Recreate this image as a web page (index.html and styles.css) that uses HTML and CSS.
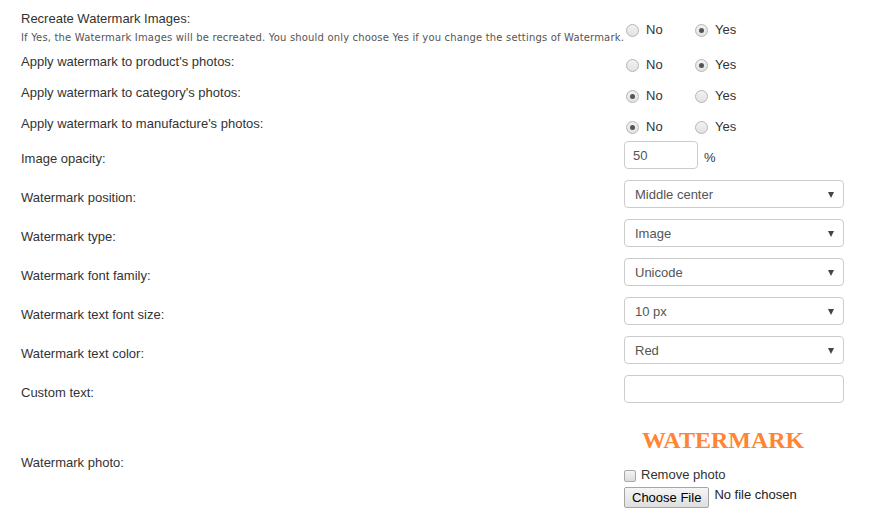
FILE: index.html
```html
<!DOCTYPE html>
<html>
<head>
<meta charset="utf-8">
<link rel="stylesheet" href="styles.css">
</head>
<body>
<div class="form">
  <div class="row r-first">
    <div class="label">
      <div class="title">Recreate Watermark Images:</div>
      <div class="hint">If Yes, the Watermark Images will be recreated. You should only choose Yes if you change the settings of Watermark.</div>
    </div>
    <div class="field radios">
      <label class="opt"><input type="radio" name="r1"><span>No</span></label>
      <label class="opt"><input type="radio" name="r1" checked><span>Yes</span></label>
    </div>
  </div>
  <div class="row r-radio">
    <div class="label">Apply watermark to product's photos:</div>
    <div class="field radios">
      <label class="opt"><input type="radio" name="r2"><span>No</span></label>
      <label class="opt"><input type="radio" name="r2" checked><span>Yes</span></label>
    </div>
  </div>
  <div class="row r-radio">
    <div class="label">Apply watermark to category's photos:</div>
    <div class="field radios">
      <label class="opt"><input type="radio" name="r3" checked><span>No</span></label>
      <label class="opt"><input type="radio" name="r3"><span>Yes</span></label>
    </div>
  </div>
  <div class="row r-radio r-last">
    <div class="label">Apply watermark to manufacture's photos:</div>
    <div class="field radios">
      <label class="opt"><input type="radio" name="r4" checked><span>No</span></label>
      <label class="opt"><input type="radio" name="r4"><span>Yes</span></label>
    </div>
  </div>
  <div class="row r-opacity">
    <div class="label">Image opacity:</div>
    <div class="field inline">
      <input class="text small" type="text" value="50"><span class="pct">%</span>
    </div>
  </div>
  <div class="row r-select">
    <div class="label">Watermark position:</div>
    <div class="field"><div class="select"><span>Middle center</span><i class="caret"></i></div></div>
  </div>
  <div class="row r-select">
    <div class="label">Watermark type:</div>
    <div class="field"><div class="select"><span>Image</span><i class="caret"></i></div></div>
  </div>
  <div class="row r-select">
    <div class="label">Watermark font family:</div>
    <div class="field"><div class="select"><span>Unicode</span><i class="caret"></i></div></div>
  </div>
  <div class="row r-select">
    <div class="label">Watermark text font size:</div>
    <div class="field"><div class="select"><span>10 px</span><i class="caret"></i></div></div>
  </div>
  <div class="row r-select">
    <div class="label">Watermark text color:</div>
    <div class="field"><div class="select"><span>Red</span><i class="caret"></i></div></div>
  </div>
  <div class="row r-select">
    <div class="label">Custom text:</div>
    <div class="field"><input class="text wide" type="text"></div>
  </div>
  <div class="row r-photo">
    <div class="label">Watermark photo:</div>
    <div class="field photo">
      <div class="wm">WATERMARK</div>
      <label class="check"><input type="checkbox"><span>Remove photo</span></label>
      <div class="file"><button class="btn" type="button">Choose File</button><span>No file chosen</span></div>
    </div>
  </div>
</div>
</body>
</html>
```
FILE: styles.css
```css
html, body { margin: 0; padding: 0; background: #fff; }
body {
  padding: 8px 0 0 0;
  font-family: "Liberation Sans", Arial, sans-serif;
  font-size: 13px;
  color: #333;
}
.form { padding-left: 21px; }
.row {
  display: grid;
  grid-template-columns: 603px 220px;
  align-items: start;
}
.label { line-height: 18px; }
.title { line-height: 18px; }
.hint {
  font-family: "DejaVu Sans", Verdana, sans-serif;
  font-size: 10px;
  line-height: 14px;
  margin-top: 3px;
  color: #555;
  white-space: nowrap;
  letter-spacing: 0.17px;
}
.r-first { height: 44px; padding-top: 2px; box-sizing: border-box; }
.r-first .radios { padding-top: 11px; }
.r-radio { height: 31px; }
.r-radio .label { padding-top: 1px; }
.r-radio .radios { padding-top: 4px; }
.r-last { height: 28px; }
.radios { display: flex; line-height: 18px; }
.opt { display: flex; align-items: center; width: 69px; }
.opt input, .check input {
  -webkit-appearance: none;
  appearance: none;
  margin: 0;
}
.opt input {
  width: 13px; height: 13px;
  margin-left: 2px;
  margin-right: 7px;
  border-radius: 50%;
  border: 1px solid #b5b5b5;
  background: linear-gradient(#f2f2f2, #e2e2e2);
  box-sizing: border-box;
  position: relative;
}
.opt input:checked::after {
  content: "";
  position: absolute;
  left: 3px; top: 3px;
  width: 5px; height: 5px;
  border-radius: 50%;
  background: #555;
}
.r-opacity { height: 38px; }
.r-opacity .label { padding-top: 8px; }
.inline { display: flex; align-items: center; }
.text {
  box-sizing: border-box;
  height: 28px;
  border: 1px solid #ccc;
  border-radius: 4px;
  font: inherit;
  color: #555;
  padding: 0 8px;
  margin: 0;
  outline: none;
  background: #fff;
}
.small { width: 74px; margin-top: -1px; }
.wide { width: 220px; }
.pct { margin-left: 6px; padding-top: 4px; }
.r-select { height: 39px; }
.r-select .label { padding-top: 9px; }
.select {
  box-sizing: border-box;
  width: 220px; height: 28px;
  border: 1px solid #ccc;
  border-radius: 4px;
  display: flex;
  align-items: center;
  justify-content: space-between;
  padding: 0 9px 0 10px;
  color: #555;
}
.caret {
  width: 0; height: 0;
  border-left: 3.5px solid transparent;
  border-right: 3.5px solid transparent;
  border-top: 6px solid #444;
  margin-top: 1px;
}
.r-photo .label { padding-top: 40px; }
.photo { padding-top: 12px; }
.wm {
  font-family: "Liberation Serif", "Times New Roman", serif;
  font-weight: bold;
  font-size: 24px;
  line-height: 28px;
  color: #ff8533;
  margin-left: 18px;
}
.check {
  display: flex;
  align-items: center;
  margin-top: 12px;
  line-height: 18px;
}
.check input {
  width: 12px; height: 12px;
  border: 1px solid #a8a8a8;
  border-radius: 2px;
  background: linear-gradient(#f4f4f4, #dcdcdc);
  margin-right: 5px;
  margin-top: 2px;
  box-sizing: border-box;
}
.file {
  display: flex;
  align-items: flex-start;
  margin-top: 3px;
}
.btn {
  height: 21px;
  box-sizing: border-box;
  padding: 0 7px;
  font: inherit;
  font-size: 13px;
  color: #000;
  border: 1px solid #a5a5a5;
  border-radius: 2px;
  background: linear-gradient(#f6f6f6, #dedede);
  margin: 0 5px 0 0;
}
.file span { line-height: 15px; color: #222; }
```
